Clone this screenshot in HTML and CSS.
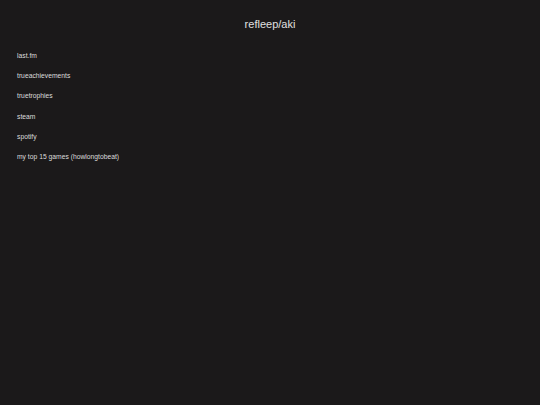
FILE: index.html
```html
<!DOCTYPE html>
<html>
<head>
<meta charset="utf-8">
<link rel="stylesheet" href="styles.css">
</head>
<body>
<h1 class="title">refleep/aki</h1>
<ul class="links">
<li><a href="#">last.fm</a></li>
<li><a href="#">trueachievements</a></li>
<li><a href="#">truetrophies</a></li>
<li><a href="#">steam</a></li>
<li><a href="#">spotify</a></li>
<li><a href="#">my top 15 games (howlongtobeat)</a></li>
</ul>
</body>
</html>
```
FILE: styles.css
```css
html, body {
  margin: 0;
  padding: 0;
  background: #1b191a;
  height: 100%;
}
body {
  font-family: "Liberation Sans", Arial, sans-serif;
  color: #d6d6d6;
}
.title {
  margin: 0;
  padding-top: 17px;
  text-align: center;
  font-size: 11px;
  font-weight: normal;
  line-height: 14px;
  color: #e0e0e0;
}
.links {
  list-style: none;
  margin: 0;
  padding: 21px 0 0 17px;
  display: flex;
  flex-direction: column;
  gap: 12px;
}
.links li {
  font-size: 6.75px;
  line-height: 8.2px;
}
.links a {
  color: #dcdcdc;
  text-decoration: none;
}
```
